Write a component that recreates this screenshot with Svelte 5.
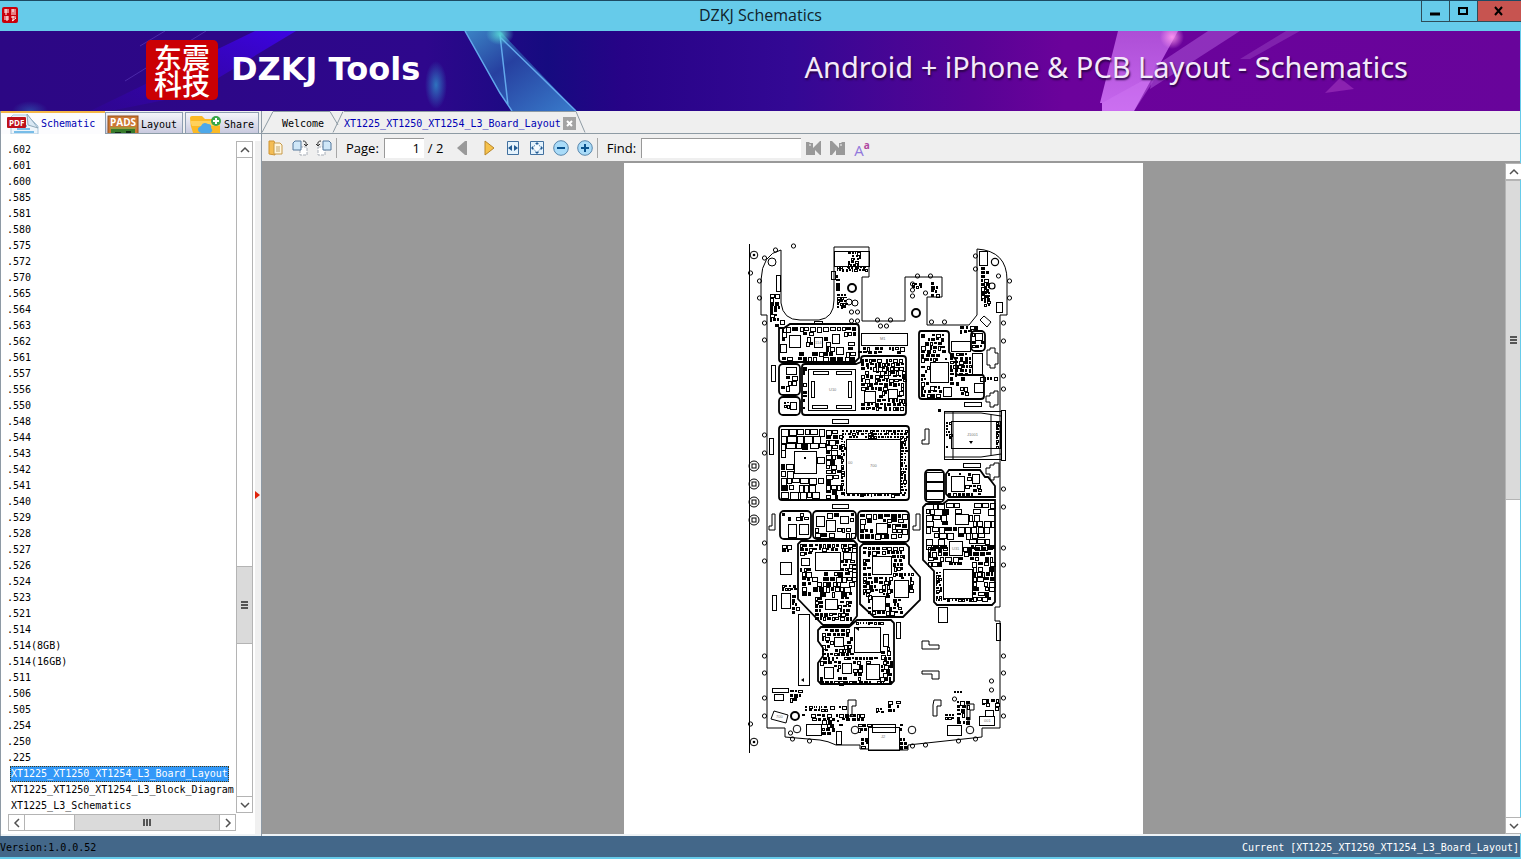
<script>
  const models = [
    "602", "601", "600", "585", "581", "580", "575", "572", "570", "565",
    "564", "563", "562", "561", "557", "556", "550", "548", "544", "543",
    "542", "541", "540", "529", "528", "527", "526", "524", "523", "521",
    "514", "514(8GB)", "514(16GB)", "511", "506", "505", "254", "250", "225"
  ];
  const files = [
    "XT1225_XT1250_XT1254_L3_Board_Layout",
    "XT1225_XT1250_XT1254_L3_Block_Diagram",
    "XT1225_L3_Schematics"
  ];

  let selected = files[0];
  let page = 1;
  let find = "";

  // small test pads round the edge: x, y
  const pads = [
    [764, 323], [764, 340], [764, 435], [764, 453], [764, 543], [764, 561],
    [764, 656], [764, 673], [764, 698], [764, 716], [775, 250], [793, 246],
    [750, 273], [759, 281], [759, 298], [764, 258], [1009, 281], [1009, 298],
    [1003, 323], [1003, 341], [1003, 376], [1003, 389], [1003, 489],
    [1003, 507], [1003, 548], [1003, 565], [1003, 656], [1003, 673],
    [1003, 698], [1003, 716], [975, 256], [975, 269], [917, 276], [930, 276],
    [877, 320], [890, 320], [931, 322], [944, 322], [880, 326], [886, 326],
    [792, 739], [809, 741], [790, 733], [750, 724], [912, 746], [925, 745],
    [958, 741], [975, 739], [991, 681], [991, 690], [954, 699], [912, 284],
    [912, 290], [912, 296], [925, 293], [998, 276], [851, 312], [857, 312],
    [851, 321], [857, 321]
  ];

  // screw holes: x, y, radius, line width
  const holes = [
    [772, 262, 4, 1], [852, 288, 4, 2], [916, 313, 4, 2], [995, 262, 3.6, 1.2],
    [992, 286, 3, 1.2], [797, 729, 3.8, 1], [855, 730, 3.8, 1],
    [912, 730, 3.8, 1], [970, 730, 3.8, 1], [795, 716, 4, 2],
    [849, 302, 3, 1], [855, 303, 3, 1]
  ];

  // chips drawn as outlines: x, y, width, height
  const chips = [
    [834, 251, 35, 15], [776, 275, 4, 16], [979, 251, 8, 14], [996, 302, 6, 10],
    [861, 333, 46, 12], [789, 335, 11, 12], [814, 337, 8, 10], [832, 334, 7, 9],
    [836, 347, 7, 7], [786, 367, 10, 7], [771, 365, 4, 16], [790, 402, 6, 7],
    [808, 369, 47, 41], [813, 371, 15, 3], [836, 371, 15, 3], [812, 405, 15, 3],
    [836, 405, 15, 3], [811, 381, 3, 16], [848, 381, 3, 16], [832, 419, 16, 4],
    [864, 391, 11, 11], [888, 389, 9, 9], [930, 362, 18, 20], [951, 341, 19, 10],
    [972, 353, 10, 21], [975, 333, 7, 7], [943, 387, 8, 9], [974, 383, 9, 9],
    [964, 402, 17, 4], [944, 411, 57, 48], [951, 421, 49, 27],
    [1001, 410, 4, 50], [963, 463, 17, 4], [769, 438, 4, 16],
    [794, 451, 22, 22], [846, 439, 54, 54],
    [832, 504, 16, 4], [788, 524, 8, 13], [799, 524, 9, 10], [826, 520, 9, 11],
    [816, 516, 8, 10], [876, 523, 11, 10], [840, 516, 8, 7],
    [926, 472, 17, 9], [926, 482, 17, 8], [926, 491, 17, 8],
    [951, 476, 13, 15], [972, 474, 7, 9], [955, 514, 13, 10],
    [949, 541, 13, 14], [943, 569, 29, 29], [938, 607, 9, 15],
    [780, 562, 11, 12], [781, 593, 9, 15], [772, 595, 4, 15],
    [798, 614, 11, 71], [815, 552, 25, 18], [801, 558, 8, 7],
    [843, 552, 8, 7], [825, 599, 12, 10], [872, 556, 19, 18],
    [894, 580, 14, 17], [872, 596, 13, 14], [854, 627, 26, 25],
    [834, 637, 9, 9], [824, 667, 9, 11], [842, 663, 9, 10],
    [866, 664, 13, 15], [883, 634, 5, 12], [896, 622, 4, 16],
    [996, 623, 4, 17], [772, 688, 16, 4], [774, 694, 9, 6],
    [806, 724, 15, 11], [836, 731, 5, 13], [947, 725, 14, 10],
    [979, 716, 15, 9], [868, 727, 31, 23], [872, 724, 23, 8],
    [985, 710, 8, 6], [814, 321, 8, 3], [780, 344, 6, 8], [831, 271, 4, 8]
  ];

  // packed areas of small parts: x, y, width, height, density, part size
  const areas = [
    [782, 327, 74, 33, 0.85, 4], [861, 359, 44, 53, 0.95, 3],
    [781, 376, 17, 16, 0.7, 4], [784, 402, 6, 10, 0.7, 2],
    [858, 347, 48, 7, 0.65, 3], [803, 367, 4, 45, 0.5, 3],
    [921, 334, 26, 63, 0.85, 3], [950, 353, 22, 22, 1, 3],
    [950, 377, 34, 20, 0.8, 4], [972, 333, 12, 17, 0.8, 3],
    [781, 429, 44, 69, 0.82, 6], [826, 430, 15, 68, 0.95, 4],
    [842, 430, 66, 8, 1, 2], [841, 438, 5, 56, 1, 2],
    [901, 438, 6, 58, 1, 2], [844, 494, 62, 4, 1, 2],
    [782, 513, 27, 9, 0.6, 3], [815, 513, 40, 24, 0.8, 4],
    [860, 514, 46, 25, 0.9, 4], [948, 473, 34, 23, 0.85, 3],
    [926, 503, 68, 44, 0.8, 5], [928, 547, 66, 20, 0.85, 4],
    [936, 572, 7, 31, 1, 2], [943, 599, 30, 4, 1, 2],
    [973, 567, 21, 36, 0.85, 4], [800, 544, 56, 27, 0.95, 3],
    [802, 572, 53, 25, 0.78, 4], [815, 597, 39, 22, 0.88, 3],
    [863, 547, 42, 25, 0.95, 3], [863, 573, 50, 22, 0.95, 3],
    [868, 595, 34, 19, 0.9, 3], [822, 629, 32, 29, 0.85, 3],
    [820, 657, 72, 26, 0.85, 3], [856, 622, 26, 4, 1, 2],
    [881, 647, 11, 12, 0.9, 3], [837, 266, 32, 7, 1, 2],
    [848, 252, 13, 18, 0.95, 2], [836, 275, 5, 16, 0.9, 3],
    [837, 294, 11, 16, 1, 2], [770, 290, 10, 33, 0.9, 3],
    [775, 320, 8, 8, 0.8, 3], [981, 267, 8, 36, 0.9, 3],
    [912, 283, 10, 6, 1, 2], [931, 282, 7, 14, 0.9, 3],
    [984, 286, 7, 20, 1, 2], [960, 326, 22, 6, 0.8, 3],
    [782, 545, 10, 7, 0.8, 3], [782, 585, 15, 5, 1, 2],
    [792, 595, 7, 18, 0.7, 3], [805, 706, 22, 6, 1, 2],
    [830, 706, 15, 4, 0.7, 3], [802, 714, 64, 9, 0.72, 3],
    [822, 720, 21, 16, 0.8, 3], [888, 701, 11, 13, 0.85, 3],
    [876, 708, 8, 5, 0.9, 2], [858, 724, 14, 8, 1, 3],
    [895, 724, 11, 8, 1, 3], [861, 738, 7, 10, 1, 3],
    [900, 738, 7, 10, 1, 3], [945, 714, 10, 7, 1, 2],
    [957, 701, 14, 22, 0.72, 3], [982, 699, 17, 13, 0.9, 3],
    [954, 691, 9, 4, 1, 2], [790, 690, 13, 13, 0.9, 3],
    [987, 377, 10, 4, 0.9, 3], [946, 422, 5, 26, 0.6, 2],
    [996, 422, 4, 26, 1, 2], [791, 561, 5, 12, 0.8, 3]
  ];

  // fills every area with parts, leaving the chips free
  const placeParts = () => {
    let seed = 1254;
    const rand = () => {
      seed = (seed * 16807) % 2147483647;
      return seed / 2147483647;
    };
    // frames that hold other parts do not block them
    const solid = chips.filter(c => !(c[2] > 30 && c[3] < 50));
    const blocked = (x, y, w, h) =>
      solid.some(
        c => x < c[0] + c[2] + 1 && x + w > c[0] - 1 && y < c[1] + c[3] + 1 && y + h > c[1] - 1
      );
    let open = "";
    let filled = "";
    areas.forEach(([ax, ay, aw, ah, density, size]) => {
      for (let y = ay; y < ay + ah - 1; y += size + 1) {
        let x = ax;
        while (x < ax + aw - 1) {
          const w = Math.round(size * (0.6 + rand() * 0.9));
          const h = Math.round(size * (0.7 + rand() * 0.6));
          const keep = rand() < density;
          const ink = rand() < (size > 4 ? 0.15 : size > 3 ? 0.42 : 0.68);
          if (keep && x + w <= ax + aw + 1 && !blocked(x, y, w, h)) {
            const d = `M${x} ${y}h${w}v${h}h${-w}z`;
            if (ink) filled += d;
            else open += d;
          }
          x += w + 1 + (rand() < 0.3 ? 1 : 0);
        }
      }
    });
    return { open, filled };
  };

  const parts = placeParts();

  const changePage = step => {
    page = Math.min(2, Math.max(1, page + step));
  };
</script>

<div class="window">
  <header class="titlebar">
    <svg class="app-icon" viewBox="0 0 16 16">
      <rect width="16" height="16" rx="2" fill="#c9000b" />
      <path d="M2 3h5M4 2v6M2 5h5M9 3h5M11 2v3M9 5h5M9 7h5M2 10h5M5 9v5M2 12h5M9 10h5M11 9v5M10 14l4-3" stroke="#fff" fill="none" />
    </svg>
    <span class="caption">DZKJ Schematics</span>
    <div class="controls">
      <button aria-label="Minimize"><svg width="12" height="12"><path d="M1 9h10" stroke="#000" stroke-width="3" /></svg></button>
      <button aria-label="Maximize"><svg width="12" height="12"><path d="M2 3h8v6H2z" stroke="#000" stroke-width="2" fill="none" /></svg></button>
      <button class="close" aria-label="Close"><svg width="12" height="12"><path d="M2 2l7 8M9 2L2 10" stroke="#000" stroke-width="2" /></svg></button>
    </div>
  </header>

  <div class="banner">
    <svg class="art" viewBox="0 0 1520 80" preserveAspectRatio="none">
      <defs>
        <linearGradient id="shard" x1="0" y1="0" x2="1" y2="1">
          <stop offset="0" stop-color="#3f9ad0" />
          <stop offset="0.4" stop-color="#284aa5" />
          <stop offset="1" stop-color="#3f8fd8" />
        </linearGradient>
        <linearGradient id="beam" x1="0" y1="0" x2="0" y2="1">
          <stop offset="0" stop-color="#ad4ed6" />
          <stop offset="1" stop-color="#c768ee" />
        </linearGradient>
        <linearGradient id="ray" x1="0" y1="1" x2="1" y2="0">
          <stop offset="0" stop-color="#3700b8" stop-opacity="0.2" />
          <stop offset="1" stop-color="#3c04e2" />
        </linearGradient>
        <radialGradient id="glow">
          <stop offset="0" stop-color="#2f7fc4" stop-opacity="0.9" />
          <stop offset="1" stop-color="#2f7fc4" stop-opacity="0" />
        </radialGradient>
        <radialGradient id="flare">
          <stop offset="0" stop-color="#58dcd8" stop-opacity="0.9" />
          <stop offset="1" stop-color="#58dcd8" stop-opacity="0" />
        </radialGradient>
        <radialGradient id="spark">
          <stop offset="0" stop-color="#ff9af0" stop-opacity="0.9" />
          <stop offset="1" stop-color="#ff9af0" stop-opacity="0" />
        </radialGradient>
      </defs>
      <path d="M255 0H296L190 64L110 80H90z" fill="url(#ray)" />
      <path d="M206 0L125 50M165 0L140 15" stroke="#6040c0" opacity="0.6" />
      <ellipse cx="436" cy="54" rx="11" ry="24" fill="url(#glow)" />
      <ellipse cx="30" cy="80" rx="18" ry="10" fill="url(#glow)" opacity="0.5" />
      <path d="M465 0H500L576 80H512L500 62z" fill="url(#shard)" opacity="0.85" />
      <path d="M465 0L500 62L512 80M500 4L508 74M500 6L576 80" stroke="#62a8ec" stroke-width="1.5" fill="none" />
      <ellipse cx="500" cy="3" rx="14" ry="11" fill="url(#flare)" />
      <path d="M1118 0H1178L1134 80H1102V72H1100z" fill="url(#beam)" />
      <path d="M1102 72L1160 40L1134 80H1102z" fill="#d27af5" opacity="0.4" />
      <path d="M1208 0H1240L1150 58L1155 35z" fill="#a64fd2" opacity="0.6" />
      <path d="M1286 0H1300L1250 28H1240z" fill="#9640c0" opacity="0.5" />
      <path d="M1325 62L1340 47L1354 58z" fill="#8b22b0" />
      <circle cx="1172" cy="6" r="12" fill="url(#spark)" />
    </svg>
    <div class="logo"><span>东震科技</span></div>
    <h1>DZKJ Tools</h1>
    <p>Android + iPhone &amp; PCB Layout - Schematics</p>
  </div>

  <main>
    <aside>
      <nav class="side-tabs">
        <button class="side-tab current">
          <svg width="32" height="20" viewBox="0 0 32 20">
            <path d="M6 1H20L31 12V20H4V3z" fill="#eef5fb" stroke="#a9c8df" />
            <path d="M20 0L31 14L21 11z" fill="#d9e8f4" stroke="#8fa9ba" />
            <path d="M10 15h13M7 18h20M15 12h5" stroke="#78bde8" stroke-width="2" />
            <rect y="3" width="19" height="11" rx="1" fill="#be1019" />
            <text x="2" y="12" class="pdf">PDF</text>
          </svg>
          Schematic
        </button>
        <button class="side-tab">
          <svg width="32" height="20" viewBox="0 0 32 20">
            <rect x="1" y="1" width="30" height="19" fill="#cb7632" stroke="#94501c" />
            <text x="3" y="11" class="pads">PADS</text>
            <path d="M4 20V14H28V20z" fill="#367b2c" />
            <path d="M8 17h6v3h-6zM19 16h5v4h-5z" fill="#102a14" />
            <path d="M3 13h26" stroke="#6fbd46" />
          </svg>
          Layout
        </button>
        <button class="side-tab">
          <svg width="32" height="20" viewBox="0 0 32 20">
            <path d="M0 3q0-2 2-2h10l3 3h12q3 0 3 3v13H4Q0 12 0 3z" fill="#fbb925" />
            <path d="M0 6h30v5H2z" fill="#ffd15b" />
            <path d="M9 17q-3-4 2-6 2-5 7-2 4 0 3 4 3 3-1 5H11z" fill="#4ea8e9" />
            <circle cx="26" cy="6" r="5" fill="#39a64a" />
            <path d="M23 6h6M26 3v6" stroke="#fff" stroke-width="2" />
          </svg>
          Share
        </button>
      </nav>
      <div class="side-body">
        <div class="list-pane">
          <ul>
            {#each models as model}
              <li>.{model}</li>
            {/each}
            {#each files as file}
              <li class="file">
                <button class:selected={file === selected} on:click={() => (selected = file)}>{file}</button>
              </li>
            {/each}
          </ul>
          <div class="hscroll">
            <button aria-label="Scroll left"><svg width="10" height="10"><path d="M7 1L3 5l4 4" /></svg></button>
            <span class="h-before"></span>
            <span class="h-thumb"><i></i></span>
            <button aria-label="Scroll right"><svg width="10" height="10"><path d="M3 1l4 4-4 4" /></svg></button>
          </div>
        </div>
        <div class="vscroll">
          <button aria-label="Scroll up"><svg width="10" height="10"><path d="M1 7l4-4 4 4" /></svg></button>
          <span class="v-before"></span>
          <span class="v-thumb"><i></i></span>
          <span class="v-after"></span>
          <button aria-label="Scroll down"><svg width="10" height="10"><path d="M1 3l4 4 4-4" /></svg></button>
        </div>
        <div class="splitter"><svg width="5" height="8"><path d="M0 0L5 4L0 8z" fill="#e0240c" /></svg></div>
      </div>
    </aside>

    <section>
      <nav class="doc-tabs">
        <svg class="slope first" width="14" height="22"><path d="M0 21.5L11 .5H14" /></svg>
        <button class="doc-tab welcome">Welcome</button>
        <svg class="slope" width="14" height="22"><path d="M0 .5L8 14M3 21.5L13 .5" /></svg>
        <button class="doc-tab opened">XT1225_XT1250_XT1254_L3_Board_Layout</button>
        <button class="tab-close" aria-label="Close tab"><svg width="13" height="13"><path d="M4 4l5 5M9 4L4 9" stroke="#fff" stroke-width="2" /></svg></button>
        <svg class="slope" width="10" height="22"><path d="M0 .5L9 21.5" /></svg>
      </nav>

      <div class="toolbar">
        <button aria-label="Open">
          <svg width="16" height="16"><path d="M1 1h5l1 3v11l-6-1z" fill="#f4bd54" stroke="#cf9433" /><path d="M6 3h6l2 2v9H6z" fill="#fff6de" stroke="#c79a48" /><path d="M8 7h4M8 9h4M8 11h4" stroke="#bda471" /></svg>
        </button>
        <button aria-label="Rotate right">
          <svg width="16" height="16"><path d="M8 7h7v8H8z" fill="#fff" stroke="#a9afb8" stroke-dasharray="3 1" /><path d="M1 3l2-2h6v9H1z" fill="#cfe7f8" stroke="#55799d" /><path d="M11 1q4 0 3 4M12 4l2 2 2-2" fill="none" stroke="#333" /></svg>
        </button>
        <button aria-label="Rotate left">
          <svg width="16" height="16"><path d="M2 7h7v8H2z" fill="#fff" stroke="#a9afb8" stroke-dasharray="3 1" /><path d="M7 1h6l2 2v7H7z" fill="#cfe7f8" stroke="#55799d" /><path d="M5 1Q1 1 2 5M0 4l2 2 2-2" fill="none" stroke="#333" /></svg>
        </button>
        <span class="divider"></span>
        <label class="page-label" for="page">Page:</label>
        <input id="page" class="page" type="text" bind:value={page} />
        <span class="total">/ 2</span>
        <button aria-label="Previous page" on:click={() => changePage(-1)}>
          <svg width="16" height="16"><path d="M13 1v14h-2L3 8l8-7z" fill="#999" /></svg>
        </button>
        <button class="next" aria-label="Next page" on:click={() => changePage(1)}>
          <svg width="16" height="16"><path d="M4 1l9 7-9 7z" fill="#f6c24c" stroke="#b8862a" /></svg>
        </button>
        <button aria-label="Fit width">
          <svg width="16" height="16"><path d="M2.500 1.500h11v13h-11z" fill="#e4f2fc" stroke="#41709f" /><path d="M7 5v6L3 8zM9 5v6l4-3z" fill="#225b93" /></svg>
        </button>
        <button aria-label="Fit page">
          <svg width="16" height="16"><path d="M1.500 1.500h13v13h-13z" fill="#e4f2fc" stroke="#41709f" /><circle cx="8" cy="8" r="3.500" fill="#f6fbff" stroke="#5c87b0" stroke-dasharray="2 1" /><path d="M8 2l2 2H6zM8 14l2-2H6zM2 8l2-2v4zM14 8l-2-2v4z" fill="#225b93" /></svg>
        </button>
        <button aria-label="Zoom out">
          <svg width="16" height="16"><circle cx="8" cy="8" r="7.300" fill="#a9dbf8" stroke="#5886ac" /><path d="M4 8h8" stroke="#09528e" stroke-width="2" /></svg>
        </button>
        <button aria-label="Zoom in">
          <svg width="16" height="16"><circle cx="8" cy="8" r="7.300" fill="#a9dbf8" stroke="#5886ac" /><path d="M4 8h8M8 4v8" stroke="#09528e" stroke-width="2" /></svg>
        </button>
        <span class="divider"></span>
        <label class="find-label" for="find">Find:</label>
        <input id="find" class="find" type="text" bind:value={find} />
        <button aria-label="Find previous">
          <svg width="16" height="16"><path d="M0 2h3l1 1h3v5l7-7h1v14h-1l-5-5v5H0z" fill="#999" /><circle cx="4" cy="5" r="1" fill="#d8d8d8" /></svg>
        </button>
        <button aria-label="Find next">
          <svg width="16" height="16"><path d="M15 2h-3l-1 1H9v5L2 1H0v14h2l4-5v5h9z" fill="#999" /><circle cx="11" cy="5" r="1" fill="#d8d8d8" /></svg>
        </button>
        <button class="case" aria-label="Match case"><span>A</span><sup>a</sup></button>
      </div>

      <div class="viewer">
        <div class="canvas">
          <div class="sheet">
            <svg class="board" width="277" height="520" viewBox="745 240 277 520">
              <g class="outline">
                <path d="M749.500 244V753" />
                <path d="M781 250V303Q783 320 800 320H819Q834 318 834 300V247H869V277H862V321H905V277H942V297H927V325H969L977 315V249Q1007 251 1007 280V315H1000V607H995V621H1000V728H982V737L908 745V750H868M868 749H860V745H836Q828 741 820 740L785 737V728H767V315H761V280Q762 254 781 250" />
                <path d="M944 413H981L1001 416M944 457H981L1001 454M953 411V459M991 415V455M922 444V440H925V429H929V444zM934 700H941V706H937V716H933V705zM848 700H856V706H852V716H848zM967 704H974V710H970V720H967zM922 641H929V645H939V649H922zM922 671H939V679H932V674H922zM769 530V526H772V514H775V530zM913 530V526H916V514H920V530z" />
                <path d="M774 711L788 715L786 723L771 719zM980 320L984 316L991 322L987 327z" />
                <path d="M987 350H990V348H995V353H998V364H995V368H990V365H987zM990 393H994V391H998V405H994V407H990V402H986V396H990zM990 465H994V463H999V477H994V480H990V474H986V468H990z" />
              </g>
              <g class="shield">
                <path d="M779 328L784 328L790 324H856Q859 324 859 328V358L855 362H782Q779 362 779 359z" />
                <rect x="779" y="364" width="21" height="31" rx="4" />
                <rect x="779" y="397" width="21" height="18" rx="4" />
                <path d="M805 364H856L861 362V359Q861 356 864 356H903Q906 356 906 359V412Q906 415 903 415H805Q802 415 802 412V367Q802 364 805 364z" />
                <path d="M921 331H946Q949 331 949 334V352L956 360V373Q956 375 959 375H982Q984 375 984 378V396Q984 399 981 399H922Q919 399 919 396V334Q919 331 921 331z" />
                <rect x="971" y="331" width="14" height="20" rx="4" />
                <rect x="779" y="426" width="130" height="74" rx="3" />
                <rect x="780" y="511" width="31" height="28" rx="4" />
                <rect x="813" y="511" width="43" height="28" rx="4" />
                <rect x="858" y="511" width="51" height="31" rx="4" />
                <rect x="925" y="470" width="19" height="32" rx="4" />
                <path d="M949 470H980L985 477H988L995 486V497H949L946 494V474z" />
                <path d="M948 500H995V602L992 605H937L934 602V571L923 560V507L926 504H943z" />
                <path d="M801 541H854L857 544V616L850 625H823L798 599V544z" />
                <path d="M863 544H906L909 547V564L920 577V600L903 617H874L860 604V547z" />
                <path d="M821 627H849L857 620H891L894 623V681L891 684H821L818 681V663L823 656V648L818 641V630z" />
              </g>
              <path d={parts.filled} fill="#000" />
              <path d={parts.open} class="parts" />
              <g class="chips">
                {#each chips as [x, y, w, h]}
                  <rect {x} {y} width={w} height={h} />
                {/each}
              </g>
              <g class="pads-ring">
                {#each pads as [x, y]}
                  <circle cx={x + 0.5} cy={y} r="2.100" />
                {/each}
              </g>
              {#each holes as [x, y, r, line]}
                <circle cx={x} cy={y} {r} stroke="#000" stroke-width={line} fill="none" />
              {/each}
              {#each [466, 484, 502, 520] as y}
                <circle class="ring" cx="754" cy={y} r="5" />
                <rect class="ring" x="752" y={y - 2} width="4" height="4" />
              {/each}
              {#each [255, 742] as y}
                <circle class="ring" cx="754" cy={y} r="3.800" />
                <circle cx="754" cy={y} r="1.300" />
              {/each}
              <path d="M938 409h3v3h-3zM804 457h2v2h-2M862 267l2 2M969 441h4l-2 3zM801 680l3 2v-4zM855 628l4 3v-4z" />
              <g class="marks">
                <text x="829" y="391">U10</text>
                <text x="870" y="467">700</text>
                <text x="848" y="464">00</text>
                <text x="880" y="340">M1</text>
                <text x="967" y="436">J1001</text>
                <text x="815" y="344">114</text>
                <text x="952" y="550">U31</text>
                <text x="881" y="738">J2</text>
                <text x="984" y="722">001</text>
                <text x="776" y="718">700</text>
              </g>
            </svg>
          </div>
        </div>
        <div class="vscroll doc-scroll">
          <button aria-label="Scroll up"><svg width="10" height="10"><path d="M1 7l4-4 4 4" /></svg></button>
          <span class="v-thumb"><i></i></span>
          <span class="v-after"></span>
          <button aria-label="Scroll down"><svg width="10" height="10"><path d="M1 3l4 4 4-4" /></svg></button>
        </div>
      </div>
    </section>
  </main>

  <footer>
    <span>Version:1.0.0.52</span>
    <span class="now">Current [{selected}]</span>
  </footer>
</div>

<style>
  :global(body) {
    margin: 0;
    background: #66cbea;
  }

  * {
    box-sizing: border-box;
  }

  button {
    margin: 0;
    padding: 0;
    border: none;
    background: none;
    color: inherit;
    font: inherit;
  }

  svg {
    display: block;
    flex: none;
  }

  .window {
    display: flex;
    flex-direction: column;
    min-height: 100vh;
    font: 10px/16px "DejaVu Sans Mono", monospace;
    color: #000;
    border-bottom: 2px solid #66cbea;
  }

  .titlebar {
    display: grid;
    grid-template-columns: 100px 1fr 100px;
    height: 31px;
    background: #66cbea;
    border-top: 1px solid #1c4a63;
  }

  .app-icon {
    width: 16px;
    height: 16px;
    margin: 6px 2px;
  }

  .caption {
    text-align: center;
    font: 16px/29px "Open Sans", sans-serif;
    color: #10222b;
  }

  .controls {
    display: flex;
    height: 21px;
    border: 1px solid #2e4b57;
    border-width: 0 0 1px 1px;
  }

  .controls button {
    display: flex;
    flex: 28;
    align-items: center;
    justify-content: center;
    border-right: 1px solid #2e4b57;
  }

  .controls .close {
    flex: 45;
    border: none;
    background: #c75450;
  }

  .banner {
    position: relative;
    display: flex;
    align-items: center;
    height: 80px;
    padding: 0 112px 0 146px;
    margin-right: 1px;
    background: linear-gradient(90deg, #2c0784 0%, #2e078c 28%, #160b80 36%, #270387 41%, #330894 52%, #570395 64%, #6b029b 70%, #68049b 100%);
    color: #fff;
  }

  .art {
    position: absolute;
    inset: 0;
    width: 100%;
    height: 100%;
  }

  .logo {
    position: relative;
    display: flex;
    flex-direction: column;
    align-items: center;
    justify-content: center;
    width: 72px;
    height: 60px;
    margin-bottom: 2px;
    border-radius: 5px;
    background: #cb0004;
    font: 500 28px/26px "Noto Sans CJK SC", sans-serif;
  }

  .logo span {
    width: 56px;
    word-break: break-all;
  }

  h1 {
    position: relative;
    margin: 0 auto 0 13px;
    padding-bottom: 4px;
    font: 700 32px/44px "DejaVu Sans", sans-serif;
  }

  .banner p {
    position: relative;
    margin: 0;
    padding-bottom: 8px;
    font: 29px/40px "Noto Sans", sans-serif;
    color: #f4eafa;
    text-shadow: 1px 2px 2px #2b0548;
  }

  main {
    display: flex;
    flex: 1;
    background: #efefef;
    margin-right: 1px;
  }

  aside {
    display: flex;
    flex-direction: column;
    flex: none;
    width: 261px;
    background: #f0f0f0;
    border-left: 1px solid #8e9aa5;
  }

  .side-tabs {
    display: flex;
    align-items: flex-end;
    height: 23px;
    border-bottom: 1px solid #8d9da8;
  }

  .side-tab {
    display: flex;
    align-items: center;
    gap: 2px;
    height: 21px;
    width: 78px;
    padding: 3px 0 0 1px;
    font-size: 10px;
    overflow: hidden;
    border: 1px solid #8d9db0;
    border-bottom: none;
    background: linear-gradient(#f5f5fa, #c9cadf);
  }

  .side-tab + .side-tab + .side-tab {
    width: 74px;
    margin-left: 2px;
    padding-left: 4px;
  }

  .side-tab.current {
    width: 104px;
    height: 23px;
    margin-bottom: -1px;
    padding: 1px 0 0 6px;
    color: #0000b4;
    border: none;
    border-top: 2px solid #f4b646;
    background: #fcfcfe;
  }

  .pdf {
    font: 700 8px "Open Sans", sans-serif;
    fill: #fff;
  }

  .pads {
    font: 700 10px "Open Sans", sans-serif;
    fill: #fff;
  }

  .side-body {
    display: flex;
    flex: 1;
    padding: 7px 0 3px 6px;
    background: #fff;
    border-bottom: 2px solid #eef3f6;
  }

  .list-pane {
    display: flex;
    flex-direction: column;
    flex: 1;
    min-width: 0;
  }

  ul {
    flex: 1;
    margin: 0;
    padding: 1px 0 0;
    list-style: none;
    overflow: hidden;
  }

  li {
    height: 16px;
    white-space: nowrap;
  }

  .file button {
    display: block;
    height: 16px;
    margin-left: 3px;
    border: 1px solid transparent;
    line-height: 14px;
  }

  .file .selected {
    background: #3298f8;
    color: #fff;
    border: 1px dotted #4b3b12;
  }

  .vscroll button,
  .hscroll button {
    display: flex;
    flex: none;
    align-items: center;
    justify-content: center;
    width: 17px;
    height: 17px;
    border: 1px solid #b4b4b4;
    background: #fff;
  }

  .vscroll path,
  .hscroll path {
    fill: none;
    stroke: #505050;
    stroke-width: 1.5;
  }

  .hscroll {
    display: flex;
    height: 17px;
    width: 228px;
    margin: 0 0 0 1px;
    border: 1px solid #b4b4b4;
    border-width: 1px 0;
  }

  .hscroll button {
    height: 15px;
    border-width: 0 1px;
  }

  .h-before {
    flex: 49;
  }

  .h-thumb,
  .v-thumb {
    display: flex;
    align-items: center;
    justify-content: center;
    background: #dadada;
  }

  .h-thumb {
    flex: 145;
    border-left: 1px solid #b4b4b4;
  }

  .h-thumb i {
    width: 8px;
    height: 7px;
    background: repeating-linear-gradient(90deg, #555 0 2px, #dadada 2px 3px);
  }

  .vscroll {
    display: flex;
    flex-direction: column;
    width: 17px;
    margin-bottom: 18px;
    border: 1px solid #b4b4b4;
    border-width: 0 1px;
  }

  .vscroll button {
    width: 15px;
    border-width: 1px 0;
  }

  .v-before {
    flex: 410;
  }

  .v-thumb {
    flex: 76;
    border: 1px solid #b4b4b4;
    border-width: 1px 0;
  }

  .v-thumb i {
    width: 7px;
    height: 8px;
    background: repeating-linear-gradient(#555 0 2px, #dadada 2px 3px);
  }

  .v-after {
    flex: 153;
  }

  .splitter {
    display: flex;
    align-items: center;
    width: 8px;
    padding: 14px 1px 0 2px;
    margin: 0 0 -3px;
    background: linear-gradient(90deg, #fff 2px, #f0f0f0 2px);
  }

  section {
    display: flex;
    flex-direction: column;
    flex: 1;
    min-width: 0;
    border-left: 1px solid #8e9aa5;
  }

  .doc-tabs {
    display: flex;
    align-items: flex-end;
    height: 23px;
    border-bottom: 1px solid #8e9ba4;
  }

  .slope path {
    fill: none;
    stroke: #8e9ba4;
  }

  .doc-tab {
    height: 22px;
    padding-top: 3px;
    border-top: 1px solid #8e9ba4;
  }

  .welcome {
    width: 54px;
  }

  .opened {
    width: 225px;
    text-align: left;
    color: #0000b4;
  }

  .tab-close {
    height: 22px;
    margin-left: -6px;
    padding-top: 2px;
    border-top: 1px solid #8e9ba4;
    background: none;
  }

  .tab-close svg {
    background: #a3a3a3;
  }

  .toolbar {
    display: flex;
    align-items: center;
    gap: 8px;
    height: 27px;
    padding: 0 6px;
    font: 13px/20px "Open Sans", sans-serif;
  }

  .toolbar button {
    width: 16px;
    height: 16px;
  }

  .toolbar .next {
    margin-left: 3px;
  }

  .divider {
    width: 1px;
    height: 20px;
    margin: 0 1px 0 -4px;
    background: #a7a7a7;
  }

  .toolbar input {
    height: 20px;
    padding: 1px 4px;
    border: 1px solid #999;
    border-width: 1px 0 0 1px;
    border-radius: 0;
    outline: none;
    background: #fff;
    font: inherit;
  }

  .toolbar .page {
    width: 40px;
    margin-left: -3px;
    text-align: right;
  }

  .toolbar .find {
    width: 160px;
    margin-left: -3px;
    margin-right: -3px;
  }

  .total {
    margin-left: -4px;
    width: 18px;
    white-space: nowrap;
  }

  .toolbar .case {
    display: flex;
    align-items: flex-start;
    font-size: 15px;
    line-height: 20px;
    color: #9278dc;
  }

  .case sup {
    font-size: 10px;
    font-weight: 700;
    line-height: 10px;
    color: #b0489f;
  }

  .viewer {
    display: flex;
    flex: 1;
    border-top: 2px solid #999;
    border-bottom: 2px solid #eef3f6;
    background: #999;
  }

  .canvas {
    display: flex;
    flex: 1;
    justify-content: center;
  }

  .sheet {
    width: 519px;
    padding-top: 77px;
    background: #fff;
  }

  .board {
    margin: 0 auto;
  }

  .doc-scroll {
    width: 15px;
    margin: 0;
    background: #fff;
    border-width: 0 0 0 1px;
  }

  .doc-scroll .v-thumb {
    flex: 319;
  }

  .doc-scroll .v-after {
    flex: 318;
  }

  .outline,
  .chips,
  .pads-ring,
  .ring {
    fill: none;
    stroke: #000;
  }

  .chips,
  .parts {
    shape-rendering: crispEdges;
  }

  .shield {
    fill: none;
    stroke: #000;
    stroke-width: 1.8;
  }

  .parts {
    fill: none;
    stroke: #000;
  }

  .marks {
    font: 4px "Liberation Sans", sans-serif;
    fill: #777;
  }

  footer {
    display: flex;
    justify-content: space-between;
    height: 21px;
    margin-right: 1px;
    padding: 4px 1px 0 0;
    background: #436789;
  }

  .now {
    color: #fff;
  }
</style>
